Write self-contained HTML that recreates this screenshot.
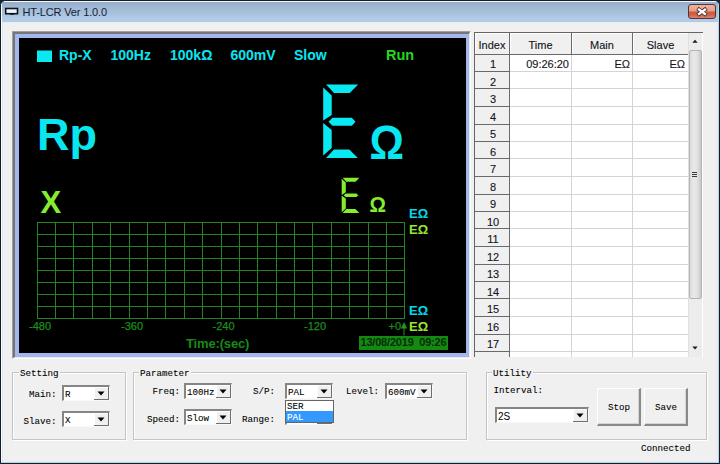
<!DOCTYPE html>
<html><head><meta charset="utf-8">
<style>
*{margin:0;padding:0;box-sizing:border-box}
html,body{width:720px;height:464px;overflow:hidden;background:#12283a;font-family:"Liberation Sans",sans-serif}
.a{position:absolute}
.t{position:absolute;white-space:nowrap;line-height:1}
.tb{-webkit-text-stroke:0.12px #141420}
.mono{font-family:"Liberation Mono",monospace;-webkit-text-stroke:0.08px #000}
</style></head>
<body>
<div class="a" style="left:0;top:0;width:720px;height:464px;border:1px solid #141e28;border-radius:6px 6px 0 0;background:#eeeaf4;overflow:hidden"><div class="a" style="left:0;top:0;width:718px;height:1px;background:#f4f8fc"></div><div class="a" style="left:0;top:1px;width:718px;height:20px;background:linear-gradient(#98afca 0px,#a0b9d4 6px,#a9c3de 12px,#b4cce9 17px,#b0cbe6 20px)"></div><div class="a" style="left:0;top:21px;width:718px;height:1px;background:#e4eef6"></div><div class="a" style="left:0;top:1px;width:1px;height:461px;background:#fbfcff"></div><div class="a" style="left:1px;top:22px;width:1px;height:440px;background:#d8e8f4"></div><div class="a" style="left:717px;top:1px;width:1px;height:461px;background:#acd8e0"></div><div class="a" style="left:0;top:461px;width:718px;height:1px;background:#acd8e6"></div><div class="a" style="left:2px;top:22px;width:713px;height:438px;background:#f0f0f0"></div></div>
<svg class="a" style="left:4px;top:7px" width="16" height="10" viewBox="0 0 16 10"><rect x="1.7" y="1.5" width="11.8" height="5.2" fill="#f0f4f8" stroke="#0d1424" stroke-width="1.6"/><path d="M6 7.8 L7 6.6 H9 L10 7.8" fill="#0d1424" stroke="#0d1424" stroke-width="0.8"/></svg>
<div class="t" style="left:22.5px;top:7px;font-size:11px;letter-spacing:-0.15px;color:#151a36">HT-LCR Ver 1.0.0</div>
<div class="a" style="left:688px;top:4px;width:28px;height:15px;border:1px solid #4e3440;border-radius:3px;background:linear-gradient(#eeb29e 0px,#eaa38c 5px,#e39a84 6px,#cf5a40 7px,#d0624a 10px,#e08470 13px)"></div>
<svg class="a" style="left:688px;top:4px" width="28" height="15" viewBox="0 0 28 15"><path d="M11 5.5 L17 10 M17 5.5 L11 10" stroke="#3a2a2a" stroke-width="3.8" stroke-linecap="square"/><path d="M11 5.5 L17 10 M17 5.5 L11 10" stroke="#ffffff" stroke-width="2.3" stroke-linecap="square"/></svg>
<div class="a" style="left:12px;top:31px;width:459px;height:328px;border-top:1px solid #a0a0a0;border-left:1px solid #a0a0a0;border-right:1px solid #ffffff;border-bottom:1px solid #ffffff;background:#a3b7ef"></div>
<div class="a" style="left:13px;top:32px;width:457px;height:326px;border-top:2px solid #767676;border-left:2px solid #767676;border-right:1px solid #e8e8e8;border-bottom:1px solid #e8e8e8"></div>
<div class="a" style="left:19px;top:38px;width:447px;height:315px;background:#000"></div>
<svg class="a" style="left:0;top:0" width="720" height="464" viewBox="0 0 720 464">
<path d="M37.5 222 V319 M55.5 222 V319 M73.5 222 V319 M92.5 222 V319 M110.5 222 V319 M129.5 222 V319 M147.5 222 V319 M165.5 222 V319 M184.5 222 V319 M202.5 222 V319 M221.5 222 V319 M239.5 222 V319 M257.5 222 V319 M276.5 222 V319 M294.5 222 V319 M312.5 222 V319 M331.5 222 V319 M349.5 222 V319 M368.5 222 V319 M386.5 222 V319 M404.5 222 V319 M37 222.5 H405 M37 234.5 H405 M37 246.5 H405 M37 258.5 H405 M37 270.5 H405 M37 282.5 H405 M37 294.5 H405 M37 306.5 H405 M37 318.5 H405" stroke="#218421" stroke-width="1" fill="none"/>
<rect x="37" y="50.5" width="15" height="11.5" fill="#0ae8f2"/>
<g font-family="Liberation Sans" font-weight="bold" font-size="14" fill="#0ae6f0">
<text x="59" y="60">Rp-X</text>
<text x="110.5" y="60">100Hz</text>
<text x="170" y="60">100kΩ</text>
<text x="230.5" y="60">600mV</text>
<text x="294" y="60">Slow</text>
</g>
<text x="386" y="60" font-family="Liberation Sans" font-weight="bold" font-size="14.5" fill="#22d822">Run</text>
<text x="37" y="149.5" font-family="Liberation Sans" font-weight="bold" font-size="45" fill="#0ae6f0">Rp</text>
<g fill="#0ae8f2"><polygon points="326,84.5 358.2,84.5 349.7,93 334,93"/>
<polygon points="323.2,87.5 331.7,95.5 331.7,115 323.2,120.5"/>
<polygon points="328.5,121.75 332.5,117.7 351.8,117.7 355.5,121.75 351.8,125.8 332.5,125.8"/>
<polygon points="323.2,123 331.7,130 331.7,148 323.2,155.5"/>
<polygon points="334,149.5 349.3,149.5 357.8,158 326,158"/></g>
<text transform="translate(370,159) scale(1,1.13)" x="-0.5" y="0" font-family="Liberation Sans" font-weight="bold" font-size="43" fill="#0ae6f0">Ω</text>
<text x="40.5" y="213" font-family="Liberation Sans" font-weight="bold" font-size="31" fill="#84ee2e">X</text>
<g fill="#84ee2e">
<polygon points="342.6,177.8 359.4,177.8 355.6,181.7 346.3,181.7"/>
<polygon points="341.7,178.8 345.8,182.6 345.8,192.2 341.7,194.9"/>
<polygon points="343.6,195.3 345.7,193.6 356.4,193.6 358.3,195.3 356.4,197 345.7,197"/>
<polygon points="341.7,195.8 345.8,198.4 345.8,208.6 341.7,212.2"/>
<polygon points="346.3,208.9 355.4,208.9 359.3,213 342.6,213"/>
</g>
<text transform="translate(369.5,212) scale(1,1.1)" x="0" y="0" font-family="Liberation Sans" font-weight="bold" font-size="20.5" fill="#84ee2e">Ω</text>
<g font-family="Liberation Sans" font-weight="bold" font-size="13">
<text x="409" y="218" fill="#00d8ec">EΩ</text>
<text x="409" y="234" fill="#9ae62e">EΩ</text>
<text x="409" y="315" fill="#00d8ec">EΩ</text>
<text x="409" y="331" fill="#9ae62e">EΩ</text>
</g>
<g font-family="Liberation Sans" font-size="11" fill="#1c8e1c" stroke="#1c8e1c" stroke-width="0.25">
<text x="29" y="330">-480</text>
<text x="121" y="330">-360</text>
<text x="212.5" y="330">-240</text>
<text x="304" y="330">-120</text>
<text x="388.5" y="330">+0</text>
</g>
<path d="M404 327 V335.5" stroke="#1e961e" stroke-width="1"/>
<polygon points="400.8,328.5 404,322 407.2,328.5" fill="#1e961e"/>
<text x="186" y="347.8" font-family="Liberation Sans" font-weight="bold" font-size="13" letter-spacing="-0.15" fill="#178a17">Time:(sec)</text>
<rect x="359" y="336" width="89" height="14" fill="#128a12"/>
<text x="360.5" y="346" font-family="Liberation Sans" font-weight="bold" font-size="11" letter-spacing="-0.2" fill="#0a2a0a" xml:space="preserve">13/08/2019  09:26</text>
</svg>
<div class="a" style="left:474px;top:32px;width:229px;height:325px;background:#fff;border-left:1px solid #646464;border-top:1px solid #646464"></div>
<div class="a" style="left:475px;top:33px;width:213px;height:21px;background:#f0f0f0"></div>
<div class="a" style="left:475px;top:55px;width:34px;height:302px;background:#f0f0f0"></div>
<div class="a" style="left:475px;top:33px;width:213px;height:1px;background:#fff"></div>
<div class="a" style="left:475px;top:33px;width:1px;height:21px;background:#fff"></div>
<div class="a" style="left:510px;top:33px;width:1px;height:21px;background:#fff"></div>
<div class="a" style="left:572px;top:33px;width:1px;height:21px;background:#fff"></div>
<div class="a" style="left:633px;top:33px;width:1px;height:21px;background:#fff"></div>
<div class="a" style="left:475px;top:54px;width:213px;height:1px;background:#6a6a6a"></div>
<div class="a" style="left:509px;top:33px;width:1px;height:324px;background:#6a6a6a"></div>
<div class="a" style="left:571px;top:33px;width:1px;height:21px;background:#6a6a6a"></div>
<div class="a" style="left:571px;top:55px;width:1px;height:302px;background:#d4d4d4"></div>
<div class="a" style="left:632px;top:33px;width:1px;height:21px;background:#6a6a6a"></div>
<div class="a" style="left:632px;top:55px;width:1px;height:302px;background:#d4d4d4"></div>
<div class="a" style="left:688px;top:33px;width:1px;height:21px;background:#6a6a6a"></div>
<div class="a" style="left:688px;top:55px;width:1px;height:302px;background:#d4d4d4"></div>
<div class="a" style="left:475px;top:71px;width:34px;height:1px;background:#6a6a6a"></div>
<div class="a" style="left:510px;top:71px;width:178px;height:1px;background:#d4d4d4"></div>
<div class="a" style="left:475px;top:88px;width:34px;height:1px;background:#6a6a6a"></div>
<div class="a" style="left:510px;top:88px;width:178px;height:1px;background:#d4d4d4"></div>
<div class="a" style="left:475px;top:106px;width:34px;height:1px;background:#6a6a6a"></div>
<div class="a" style="left:510px;top:106px;width:178px;height:1px;background:#d4d4d4"></div>
<div class="a" style="left:475px;top:124px;width:34px;height:1px;background:#6a6a6a"></div>
<div class="a" style="left:510px;top:124px;width:178px;height:1px;background:#d4d4d4"></div>
<div class="a" style="left:475px;top:141px;width:34px;height:1px;background:#6a6a6a"></div>
<div class="a" style="left:510px;top:141px;width:178px;height:1px;background:#d4d4d4"></div>
<div class="a" style="left:475px;top:158px;width:34px;height:1px;background:#6a6a6a"></div>
<div class="a" style="left:510px;top:158px;width:178px;height:1px;background:#d4d4d4"></div>
<div class="a" style="left:475px;top:176px;width:34px;height:1px;background:#6a6a6a"></div>
<div class="a" style="left:510px;top:176px;width:178px;height:1px;background:#d4d4d4"></div>
<div class="a" style="left:475px;top:194px;width:34px;height:1px;background:#6a6a6a"></div>
<div class="a" style="left:510px;top:194px;width:178px;height:1px;background:#d4d4d4"></div>
<div class="a" style="left:475px;top:211px;width:34px;height:1px;background:#6a6a6a"></div>
<div class="a" style="left:510px;top:211px;width:178px;height:1px;background:#d4d4d4"></div>
<div class="a" style="left:475px;top:228px;width:34px;height:1px;background:#6a6a6a"></div>
<div class="a" style="left:510px;top:228px;width:178px;height:1px;background:#d4d4d4"></div>
<div class="a" style="left:475px;top:246px;width:34px;height:1px;background:#6a6a6a"></div>
<div class="a" style="left:510px;top:246px;width:178px;height:1px;background:#d4d4d4"></div>
<div class="a" style="left:475px;top:264px;width:34px;height:1px;background:#6a6a6a"></div>
<div class="a" style="left:510px;top:264px;width:178px;height:1px;background:#d4d4d4"></div>
<div class="a" style="left:475px;top:281px;width:34px;height:1px;background:#6a6a6a"></div>
<div class="a" style="left:510px;top:281px;width:178px;height:1px;background:#d4d4d4"></div>
<div class="a" style="left:475px;top:298px;width:34px;height:1px;background:#6a6a6a"></div>
<div class="a" style="left:510px;top:298px;width:178px;height:1px;background:#d4d4d4"></div>
<div class="a" style="left:475px;top:316px;width:34px;height:1px;background:#6a6a6a"></div>
<div class="a" style="left:510px;top:316px;width:178px;height:1px;background:#d4d4d4"></div>
<div class="a" style="left:475px;top:334px;width:34px;height:1px;background:#6a6a6a"></div>
<div class="a" style="left:510px;top:334px;width:178px;height:1px;background:#d4d4d4"></div>
<div class="a" style="left:475px;top:351px;width:34px;height:1px;background:#6a6a6a"></div>
<div class="a" style="left:510px;top:351px;width:178px;height:1px;background:#d4d4d4"></div>
<div class="t tb" style="left:475px;top:39.5px;width:34px;text-align:center;font-size:11px;color:#141420">Index</div>
<div class="t tb" style="left:510px;top:39.5px;width:61px;text-align:center;font-size:11px;color:#141420">Time</div>
<div class="t tb" style="left:572px;top:39.5px;width:60px;text-align:center;font-size:11px;color:#141420">Main</div>
<div class="t tb" style="left:633px;top:39.5px;width:55px;text-align:center;font-size:11px;color:#141420">Slave</div>
<div class="t tb" style="left:476px;top:59.0px;width:34px;text-align:center;font-size:11px;color:#141420">1</div>
<div class="t tb" style="left:476px;top:76.5px;width:34px;text-align:center;font-size:11px;color:#141420">2</div>
<div class="t tb" style="left:476px;top:94.0px;width:34px;text-align:center;font-size:11px;color:#141420">3</div>
<div class="t tb" style="left:476px;top:111.5px;width:34px;text-align:center;font-size:11px;color:#141420">4</div>
<div class="t tb" style="left:476px;top:129.0px;width:34px;text-align:center;font-size:11px;color:#141420">5</div>
<div class="t tb" style="left:476px;top:146.5px;width:34px;text-align:center;font-size:11px;color:#141420">6</div>
<div class="t tb" style="left:476px;top:164.0px;width:34px;text-align:center;font-size:11px;color:#141420">7</div>
<div class="t tb" style="left:476px;top:181.5px;width:34px;text-align:center;font-size:11px;color:#141420">8</div>
<div class="t tb" style="left:476px;top:199.0px;width:34px;text-align:center;font-size:11px;color:#141420">9</div>
<div class="t tb" style="left:476px;top:216.5px;width:34px;text-align:center;font-size:11px;color:#141420">10</div>
<div class="t tb" style="left:476px;top:234.0px;width:34px;text-align:center;font-size:11px;color:#141420">11</div>
<div class="t tb" style="left:476px;top:251.5px;width:34px;text-align:center;font-size:11px;color:#141420">12</div>
<div class="t tb" style="left:476px;top:269.0px;width:34px;text-align:center;font-size:11px;color:#141420">13</div>
<div class="t tb" style="left:476px;top:286.5px;width:34px;text-align:center;font-size:11px;color:#141420">14</div>
<div class="t tb" style="left:476px;top:304.0px;width:34px;text-align:center;font-size:11px;color:#141420">15</div>
<div class="t tb" style="left:476px;top:321.5px;width:34px;text-align:center;font-size:11px;color:#141420">16</div>
<div class="t tb" style="left:476px;top:339.0px;width:34px;text-align:center;font-size:11px;color:#141420">17</div>
<div class="t tb" style="left:510px;top:59px;width:59px;text-align:right;font-size:11px;color:#141420">09:26:20</div>
<div class="t tb" style="left:572px;top:59px;width:58px;text-align:right;font-size:11px;color:#141420">EΩ</div>
<div class="t tb" style="left:633px;top:59px;width:52px;text-align:right;font-size:11px;color:#141420">EΩ</div>
<div class="a" style="left:688px;top:33px;width:14px;height:324px;background:#ececec;border-left:1px solid #e0e0e0"></div>
<div class="a" style="left:689px;top:50px;width:13px;height:249px;background:linear-gradient(90deg,#dadada,#e9e9e9 35%,#e2e2e2 65%,#c8c8c8);border:1px solid #b4b4b4;border-radius:2px"></div>
<svg class="a" style="left:689px;top:169px" width="13" height="10"><path d="M3 3.5H8 M3 5.5H8 M3 7.5H8" stroke="#3a3a3a" stroke-width="1"/></svg>
<svg class="a" style="left:688px;top:33px" width="14" height="17"><polygon points="4.3,9.8 7,6.8 9.7,9.8" fill="#1a1a1a"/></svg>
<svg class="a" style="left:688px;top:339px" width="14" height="17"><polygon points="4.3,7.5 7,10.5 9.7,7.5" fill="#1a1a1a"/></svg>
<div class="a" style="left:12px;top:372px;width:114px;height:68px;border:1px solid #c4c4c4;box-shadow:inset 1px 1px 0 #fff,1px 1px 0 #fff"></div>
<div class="t mono" style="left:19px;top:369px;padding:0 1px;background:#f0f0f0;font-size:9.2px;color:#000">Setting</div>
<div class="a" style="left:133px;top:372px;width:334px;height:68px;border:1px solid #c4c4c4;box-shadow:inset 1px 1px 0 #fff,1px 1px 0 #fff"></div>
<div class="t mono" style="left:139px;top:369px;padding:0 1px;background:#f0f0f0;font-size:9.2px;color:#000">Parameter</div>
<div class="a" style="left:486px;top:372px;width:221px;height:68px;border:1px solid #c4c4c4;box-shadow:inset 1px 1px 0 #fff,1px 1px 0 #fff"></div>
<div class="t mono" style="left:492px;top:369px;padding:0 1px;background:#f0f0f0;font-size:9.2px;color:#000">Utility</div>
<div class="t mono" style="left:-63.5px;top:389.5px;width:120px;text-align:right;font-size:9.2px;color:#000">Main:</div>
<div class="t mono" style="left:-63.5px;top:417.0px;width:120px;text-align:right;font-size:9.2px;color:#000">Slave:</div>
<div class="a" style="left:62px;top:385px;width:48px;height:16px;background:#fff;border-top:2px solid #858585;border-left:2px solid #858585;border-right:1px solid #f8f8f8;border-bottom:1px solid #f8f8f8;"></div>
<div class="t mono" style="left:65px;top:390px;font-size:9.2px;color:#000">R</div>
<div class="a" style="left:94px;top:387px;width:15px;height:13px;background:#f0f0f0;border-right:1px solid #6e6e6e;border-bottom:1px solid #6e6e6e;box-shadow:inset 1px 1px 0 #fff"></div>
<svg class="a" style="left:94px;top:387px" width="15" height="13"><polygon points="3.5,4.5 10.5,4.5 7,8.5" fill="#000"/></svg>
<div class="a" style="left:62px;top:411px;width:48px;height:16px;background:#fff;border-top:2px solid #858585;border-left:2px solid #858585;border-right:1px solid #f8f8f8;border-bottom:1px solid #f8f8f8;"></div>
<div class="t mono" style="left:65px;top:416px;font-size:9.2px;color:#000">X</div>
<div class="a" style="left:94px;top:413px;width:15px;height:13px;background:#f0f0f0;border-right:1px solid #6e6e6e;border-bottom:1px solid #6e6e6e;box-shadow:inset 1px 1px 0 #fff"></div>
<svg class="a" style="left:94px;top:413px" width="15" height="13"><polygon points="3.5,4.5 10.5,4.5 7,8.5" fill="#000"/></svg>
<div class="t mono" style="left:60px;top:386.5px;width:120px;text-align:right;font-size:9.2px;color:#000">Freq:</div>
<div class="t mono" style="left:60px;top:414.5px;width:120px;text-align:right;font-size:9.2px;color:#000">Speed:</div>
<div class="a" style="left:184px;top:383px;width:48px;height:16px;background:#fff;border-top:2px solid #858585;border-left:2px solid #858585;border-right:1px solid #f8f8f8;border-bottom:1px solid #f8f8f8;"></div>
<div class="t mono" style="left:187px;top:388px;font-size:9.2px;color:#000">100Hz</div>
<div class="a" style="left:216px;top:385px;width:15px;height:13px;background:#f0f0f0;border-right:1px solid #6e6e6e;border-bottom:1px solid #6e6e6e;box-shadow:inset 1px 1px 0 #fff"></div>
<svg class="a" style="left:216px;top:385px" width="15" height="13"><polygon points="3.5,4.5 10.5,4.5 7,8.5" fill="#000"/></svg>
<div class="a" style="left:184px;top:409px;width:48px;height:16px;background:#fff;border-top:2px solid #858585;border-left:2px solid #858585;border-right:1px solid #f8f8f8;border-bottom:1px solid #f8f8f8;"></div>
<div class="t mono" style="left:187px;top:414px;font-size:9.2px;color:#000">Slow</div>
<div class="a" style="left:216px;top:411px;width:15px;height:13px;background:#f0f0f0;border-right:1px solid #6e6e6e;border-bottom:1px solid #6e6e6e;box-shadow:inset 1px 1px 0 #fff"></div>
<svg class="a" style="left:216px;top:411px" width="15" height="13"><polygon points="3.5,4.5 10.5,4.5 7,8.5" fill="#000"/></svg>
<div class="t mono" style="left:155px;top:386.5px;width:120px;text-align:right;font-size:9.2px;color:#000">S/P:</div>
<div class="t mono" style="left:155px;top:414.5px;width:120px;text-align:right;font-size:9.2px;color:#000">Range:</div>
<div class="a" style="left:285px;top:383px;width:48px;height:16px;background:#fff;border-top:2px solid #858585;border-left:2px solid #858585;border-right:1px solid #f8f8f8;border-bottom:1px solid #f8f8f8;"></div>
<div class="t mono" style="left:288px;top:388px;font-size:9.2px;color:#000">PAL</div>
<div class="a" style="left:317px;top:385px;width:15px;height:13px;background:#f0f0f0;border-right:1px solid #6e6e6e;border-bottom:1px solid #6e6e6e;box-shadow:inset 1px 1px 0 #fff"></div>
<svg class="a" style="left:317px;top:385px" width="15" height="13"><polygon points="3.5,4.5 10.5,4.5 7,8.5" fill="#000"/></svg>
<div class="a" style="left:285px;top:409px;width:48px;height:16px;background:#fff;border-top:2px solid #858585;border-left:2px solid #858585;border-right:1px solid #f8f8f8;border-bottom:1px solid #f8f8f8;"></div>
<div class="t mono" style="left:288px;top:414px;font-size:9.2px;color:#000"></div>
<div class="a" style="left:317px;top:411px;width:15px;height:13px;background:#f0f0f0;border-right:1px solid #6e6e6e;border-bottom:1px solid #6e6e6e;box-shadow:inset 1px 1px 0 #fff"></div>
<svg class="a" style="left:317px;top:411px" width="15" height="13"><polygon points="3.5,4.5 10.5,4.5 7,8.5" fill="#000"/></svg>
<div class="t mono" style="left:259px;top:386.5px;width:120px;text-align:right;font-size:9.2px;color:#000">Level:</div>
<div class="a" style="left:385px;top:383px;width:48px;height:16px;background:#fff;border-top:2px solid #858585;border-left:2px solid #858585;border-right:1px solid #f8f8f8;border-bottom:1px solid #f8f8f8;"></div>
<div class="t mono" style="left:388px;top:388px;font-size:9.2px;color:#000">600mV</div>
<div class="a" style="left:417px;top:385px;width:15px;height:13px;background:#f0f0f0;border-right:1px solid #6e6e6e;border-bottom:1px solid #6e6e6e;box-shadow:inset 1px 1px 0 #fff"></div>
<svg class="a" style="left:417px;top:385px" width="15" height="13"><polygon points="3.5,4.5 10.5,4.5 7,8.5" fill="#000"/></svg>
<div class="a" style="left:285px;top:400px;width:49px;height:23px;background:#fff;border:1px solid #646464"></div>
<div class="a" style="left:286px;top:411px;width:47px;height:11px;background:#3399ff"></div>
<div class="t mono" style="left:287px;top:402px;font-size:9.2px;color:#000">SER</div>
<div class="t mono" style="left:287px;top:412.5px;font-size:9.2px;color:#fff;-webkit-text-stroke:0.1px #fff">PAL</div>
<div class="t mono" style="left:423px;top:386.0px;width:120px;text-align:right;font-size:9.2px;color:#000">Interval:</div>
<div class="a" style="left:495px;top:407px;width:94px;height:16px;background:#fff;border-top:2px solid #858585;border-left:2px solid #858585;border-right:1px solid #f8f8f8;border-bottom:1px solid #f8f8f8;"></div>
<div class="t" style="left:498px;top:411.5px;font-size:10px;color:#000">2S</div>
<div class="a" style="left:573px;top:409px;width:15px;height:13px;background:#f0f0f0;border-right:1px solid #6e6e6e;border-bottom:1px solid #6e6e6e;box-shadow:inset 1px 1px 0 #fff"></div>
<svg class="a" style="left:573px;top:409px" width="15" height="13"><polygon points="3.5,4.5 10.5,4.5 7,8.5" fill="#000"/></svg>
<div class="a" style="left:597px;top:388px;width:44px;height:38px;background:#f0f0f0;border-top:1px solid #fff;border-left:1px solid #fff;border-right:2px solid #8a8a8a;border-bottom:2px solid #8a8a8a;box-shadow:inset -1px -1px 0 #d4d4d4"></div>
<div class="t mono" style="left:597px;top:402.5px;width:44px;text-align:center;font-size:9.2px;color:#000">Stop</div>
<div class="a" style="left:644px;top:388px;width:44px;height:38px;background:#f0f0f0;border-top:1px solid #fff;border-left:1px solid #fff;border-right:2px solid #8a8a8a;border-bottom:2px solid #8a8a8a;box-shadow:inset -1px -1px 0 #d4d4d4"></div>
<div class="t mono" style="left:644px;top:402.5px;width:44px;text-align:center;font-size:9.2px;color:#000">Save</div>
<div class="t mono" style="left:641px;top:443.5px;font-size:9.2px;color:#000">Connected</div>
</body></html>
